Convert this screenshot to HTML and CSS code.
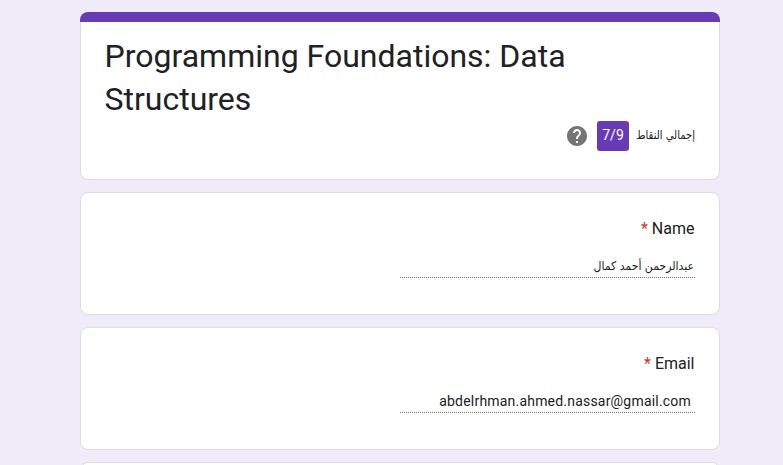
FILE: index.html
```html
<!DOCTYPE html>
<html lang="ar" dir="rtl">
<head>
<meta charset="utf-8">
<title>Programming Foundations: Data Structures</title>
<link rel="stylesheet" href="styles.css">
</head>
<body>
<main class="form">
  <header class="intro">
    <div class="stripe"></div>
    <div class="card intro-body">
      <h1 class="title" dir="ltr">Programming Foundations: Data Structures</h1>
      <div class="score">
        <span class="score-label">إجمالي النقاط</span>
        <span class="badge" dir="ltr">7/9</span>
        <svg class="help" viewBox="0 0 24 24"><path d="M12 2C6.480 2 2 6.480 2 12s4.480 10 10 10 10-4.480 10-10S17.520 2 12 2zm1 17h-2v-2h2v2zm2.070-7.750l-.9.920C13.450 12.900 13 13.500 13 15h-2v-.5c0-1.100.45-2.100 1.170-2.830l1.240-1.260c.37-.36.59-.86.59-1.410 0-1.100-.9-2-2-2s-2 .9-2 2H8c0-2.210 1.790-4 4-4s4 1.790 4 4c0 .88-.36 1.680-.93 2.250z"/></svg>
      </div>
    </div>
  </header>
  <section class="card question">
    <h2 class="label" dir="ltr"><span class="required">*</span> Name</h2>
    <div class="answer arabic">عبدالرحمن أحمد كمال</div>
  </section>
  <section class="card question">
    <h2 class="label" dir="ltr"><span class="required">*</span> Email</h2>
    <div class="answer email"><bdi>abdelrhman.ahmed.nassar@gmail.com</bdi></div>
  </section>
  <section class="card question"></section>
</main>
</body>
</html>
```

FILE: styles.css
```css
* { box-sizing: border-box; }
body {
  margin: 0;
  background: #f0ebf8;
  color: #202124;
  font-family: Roboto, "DejaVu Sans Condensed", "DejaVu Sans", sans-serif;
}
.form {
  width: 640px;
  height: 465px;
  overflow: hidden;
  margin-right: 63px;
  padding-top: 12px;
  display: flex;
  flex-direction: column;
  gap: 12px;
}
.card {
  background: #fff;
  border: 1px solid #dadce0;
  border-radius: 8px;
}
.intro { flex-shrink: 0; }
.stripe {
  height: 10px;
  border-radius: 8px 8px 0 0;
  background: #673ab7;
}
.intro-body {
  height: 158px;
  border-top: 0;
  border-radius: 0 0 8px 8px;
  padding: 13px 24px 0;
}
.title {
  margin: 0 0 0 -0.5px;
  font-size: 32px;
  line-height: 43px;
  font-weight: 400;
}
.score {
  display: flex;
  align-items: center;
  height: 30px;
}
.score-label {
  width: 58px;
  margin-top: -2px;
  font-family: "DejaVu Sans Condensed", "DejaVu Sans", sans-serif;
  font-stretch: condensed;
  font-size: 12px;
  white-space: nowrap;
  transform: scaleX(.93);
  transform-origin: right center;
}
.badge {
  width: 32px;
  height: 30px;
  margin-right: 8px;
  border-radius: 3px;
  background: #673ab7;
  color: #fff;
  font-size: 14px;
  line-height: 29px;
  text-align: center;
}
.help {
  width: 24px;
  height: 24px;
  margin-right: 8px;
  fill: #757575;
}
.question {
  height: 123px;
  flex-shrink: 0;
  padding: 24px;
}
.label {
  margin: 0;
  padding-right: .5px;
  font-size: 16px;
  line-height: 24px;
  font-weight: 400;
  text-align: right;
}
.required { color: #d93025; }
.answer {
  width: 295px;
  height: 25px;
  margin-top: 12px;
  border-bottom: 1px dotted #757575;
  font-size: 14px;
  line-height: 26px;
}
.arabic {
  font-family: "DejaVu Sans Condensed", "DejaVu Sans", sans-serif;
  font-stretch: condensed;
  font-size: 12.1px;
  padding-right: 1px;
}
.email {
  letter-spacing: .2px;
  padding-right: 4px;
}
```
